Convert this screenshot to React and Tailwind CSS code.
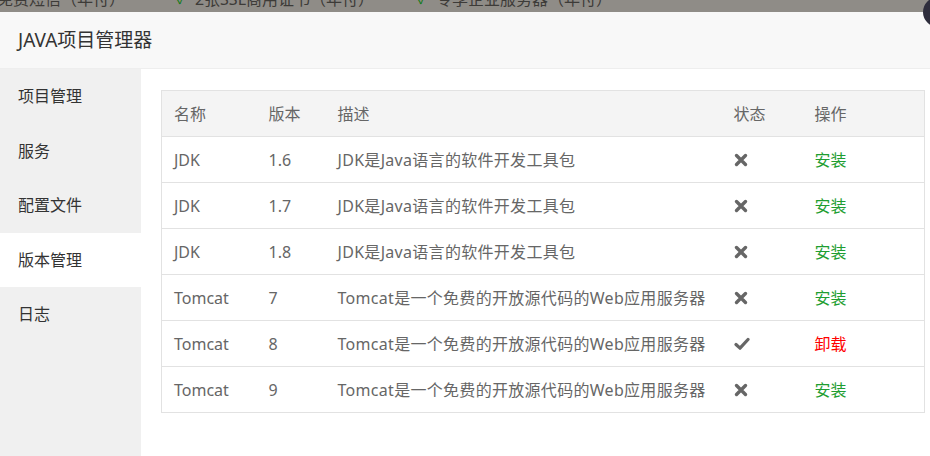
import React from 'react';

const font = { fontFamily: '"Noto Sans", "Noto Sans CJK SC", sans-serif' };

const menu = ['项目管理', '服务', '配置文件', '版本管理', '日志'];

const rows = [
  { name: 'JDK', ver: '1.6', desc: 'JDK是Java语言的软件开发工具包', installed: false },
  { name: 'JDK', ver: '1.7', desc: 'JDK是Java语言的软件开发工具包', installed: false },
  { name: 'JDK', ver: '1.8', desc: 'JDK是Java语言的软件开发工具包', installed: false },
  { name: 'Tomcat', ver: '7', desc: 'Tomcat是一个免费的开放源代码的Web应用服务器', installed: false },
  { name: 'Tomcat', ver: '8', desc: 'Tomcat是一个免费的开放源代码的Web应用服务器', installed: true },
  { name: 'Tomcat', ver: '9', desc: 'Tomcat是一个免费的开放源代码的Web应用服务器', installed: false },
];

const headers = ['名称', '版本', '描述', '状态', '操作'];

function TimesIcon() {
  return (
    <svg width="14" height="14" viewBox="0 0 14 14" className="block">
      <path d="M2.5 2.5 L11.5 11.5 M11.5 2.5 L2.5 11.5" stroke="#666" strokeWidth="3.4" strokeLinecap="round" fill="none" />
    </svg>
  );
}

function CheckIcon() {
  return (
    <svg width="16" height="14" viewBox="0 0 16 14" className="block">
      <path d="M2 7.5 L6 11.2 L14 2.5" stroke="#666" strokeWidth="3.2" strokeLinecap="round" strokeLinejoin="round" fill="none" />
    </svg>
  );
}

function SmallCheck() {
  return <span className="text-[#0e7a12] text-[13px]">✓</span>;
}

export default function App() {
  return (
    <div className="relative h-[456px] w-[930px] overflow-hidden bg-[#8f8c87]" style={font}>
      {/* dimmed page behind the dialog */}
      <div className="h-[12px] overflow-hidden">
        <div className="-mt-[12px] flex items-center whitespace-nowrap text-[16px] leading-[20px] text-[#3d3b38]">
          <span className="-ml-[3px]">免费短信（年付）</span>
          <span className="ml-[52px]"><SmallCheck /></span>
          <span className="ml-[9px]">2张SSL商用证书（年付）</span>
          <span className="ml-[44px]"><SmallCheck /></span>
          <span className="ml-[9px]">专享企业服务器（年付）</span>
        </div>
      </div>

      <div className="flex h-[444px] flex-col bg-white">
        <div className="flex h-[57px] shrink-0 items-center border-b border-[#eeeeee] bg-[#f8f8f8] px-[18px] text-[19px] text-[#333]">
          JAVA项目管理器
        </div>

        <div className="flex flex-1">
          <div className="w-[141px] shrink-0 bg-[#f0f0f0]">
            {menu.map((m) => (
              <div
                key={m}
                className={
                  'flex h-[54.5px] items-center px-[18px] text-[16px] text-[#333] ' +
                  (m === '版本管理' ? 'bg-white' : '')
                }
              >
                {m}
              </div>
            ))}
          </div>

          <div className="flex-1 pl-[20px] pt-[21px]">
            <table className="w-[764px] table-fixed border-collapse border border-[#e2e2e2] text-left text-[16px] text-[#666]">
              <colgroup>
                <col className="w-[95px]" />
                <col className="w-[69px]" />
                <col className="w-[396px]" />
                <col className="w-[81px]" />
                <col />
              </colgroup>
              <thead>
                <tr className="h-[46px] bg-[#f4f4f4]">
                  {headers.map((h) => (
                    <th key={h} className="border-y border-[#e2e2e2] pl-[12px] font-normal">{h}</th>
                  ))}
                </tr>
              </thead>
              <tbody>
                {rows.map((r, i) => (
                  <tr key={i} className="h-[46px]">
                    <td className="border-y border-[#e2e2e2] pl-[12px]">{r.name}</td>
                    <td className="border-y border-[#e2e2e2] pl-[12px]">{r.ver}</td>
                    <td className="border-y border-[#e2e2e2] pl-[12px] whitespace-nowrap tracking-[0.3px]">{r.desc}</td>
                    <td className="border-y border-[#e2e2e2] pl-[12px]">
                      {r.installed ? <CheckIcon /> : <TimesIcon />}
                    </td>
                    <td className="border-y border-[#e2e2e2] pl-[12px]">
                      {r.installed ? (
                        <span className="text-[#ff0000]">卸载</span>
                      ) : (
                        <span className="text-[#1f9e32]">安装</span>
                      )}
                    </td>
                  </tr>
                ))}
              </tbody>
            </table>
          </div>
        </div>
      </div>

      <div className="absolute left-[923px] top-[-3px] h-[30px] w-[30px] rounded-full bg-[#2e2d3c]" />
    </div>
  );
}
